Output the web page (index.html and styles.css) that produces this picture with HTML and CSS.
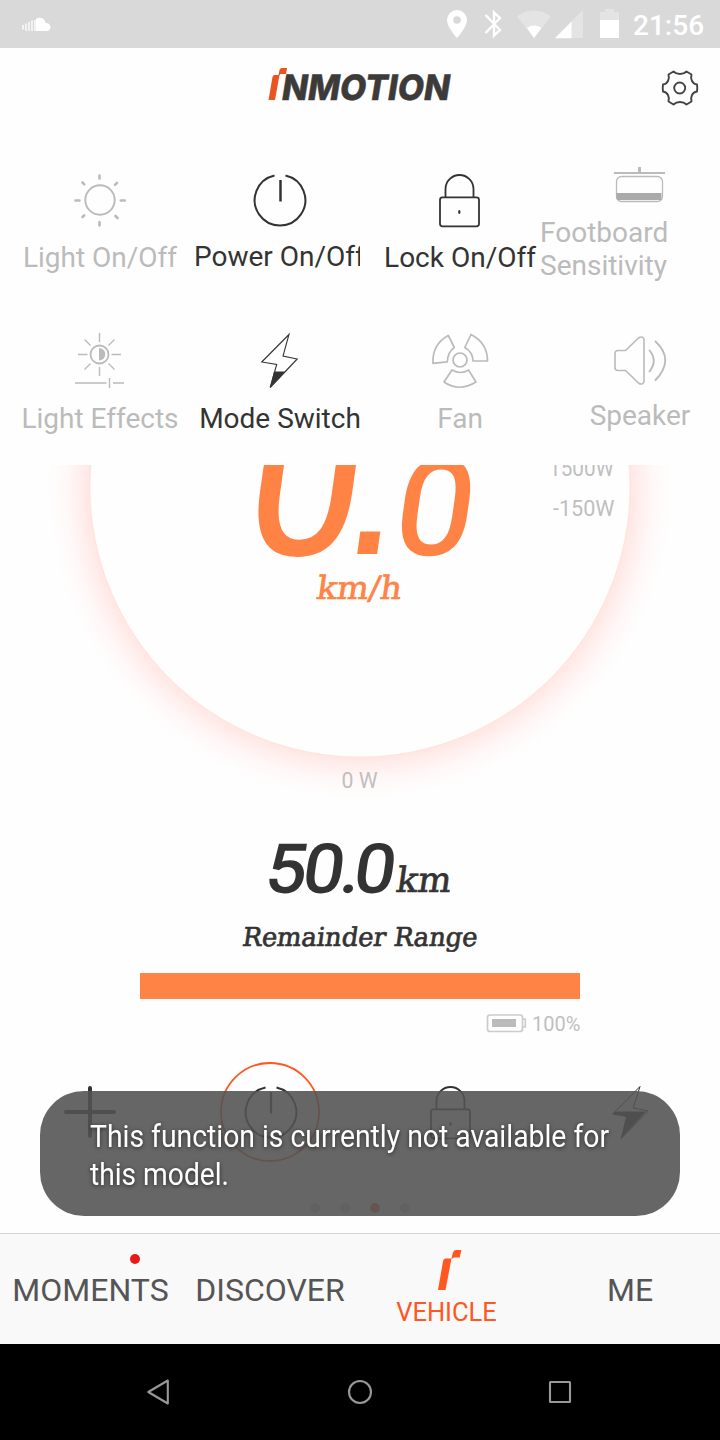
FILE: index.html
```html
<!DOCTYPE html>
<html lang="en">
<head>
<meta charset="utf-8">
<title>InMotion</title>
<link rel="stylesheet" href="styles.css">
</head>
<body>
<div class="screen">
  <header class="status">
    <svg class="status-left" viewBox="0 0 60 48" width="60" height="48">
      <path fill="#fff" d="M36 31V19c1-1 2.500-1.300 4-1.200a5.500 5.500 0 0 1 5.500 5.200c3-.3 5 1.500 5 4s-2 4-4 4z"/>
      <path stroke="#fff" stroke-width="1.800" opacity=".75" d="M23 25v4.500M26 23.500V31M29 22v9M32 20.500V31M35 20v11"/>
    </svg>
    <svg class="status-icons" viewBox="440 0 190 48" width="190" height="48">
      <path fill="#fff" fill-rule="evenodd" d="M457 10a10 10 0 0 0-10 10c0 7 10 18 10 18s10-11 10-18a10 10 0 0 0-10-10zm0 6.200a3.800 3.800 0 1 1 0 7.600 3.800 3.800 0 0 1 0-7.600z"/>
      <path fill="none" stroke="#fff" stroke-width="2.400" d="M485.500 15L500 30l-6 5.500V12.500l6 5.500-14.500 15"/>
      <path fill="#fff" opacity=".3" d="M534 38L517 16.500a27 27 0 0 1 34 0z"/>
      <path fill="#fff" d="M534 38l-7-10a12 12 0 0 1 14.500 0z"/>
      <path fill="#fff" opacity=".3" d="M583 10v28h-28z"/>
      <path fill="#fff" d="M571.500 21.500V38.300H555z"/>
      <path fill="#fff" opacity=".3" d="M600 20v-8h5V9h9v3h5v8z"/>
      <path fill="#fff" d="M600 20h19v18h-19z"/>
    </svg>
    <span class="clock">21:56</span>
  </header>

  <section class="panel">
    <div class="brand">
      <svg class="logo" viewBox="260 60 200 50" width="200" height="50" role="img">
        <path fill="#e95420" d="M274.500 75h5l-4.500 25h-6.500l4-23q.3-2 2-2zM282 68h5l-1 6h-5.500l-.7 1h-1.300l1-5q.5-2 2.500-2z"/>
        <text class="logo-text" transform="translate(280.500 100) skewX(-9)" textLength="168" lengthAdjust="spacingAndGlyphs">NMOTION</text>
      </svg>
      <svg class="gear" viewBox="660 68 40 40" width="40" height="40">
        <g fill="none" stroke="#444" stroke-width="1.900" stroke-linejoin="round">
          <path d="M673.500 71.500Q676 74 680 74t6.500-2.500l5 3q-1 3.500 .5 6.500t5 3.500q.6 3.500 0 7-3.500.5-5 3.500t-.5 6.500l-5 3q-2.500-2.500-6.500-2.500t-6.500 2.500l-5-3q1-3.500-.5-6.500t-5-3.500q-.6-3.500 0-7 3.500-.5 5-3.500t.5-6.500z"/>
          <circle cx="679.700" cy="88" r="5.500"/>
        </g>
      </svg>
    </div>
    <div class="tiles">
      <div class="tile off">
        <svg viewBox="0 150 180 91" width="180" height="91"><g fill="none" stroke="#bbb">
          <circle cx="100" cy="200" r="14.700" stroke-width="1.900"/>
          <path stroke-width="2.600" stroke-linecap="round" d="M99.500 175.500v3M99.500 222v3.500M75.500 200.500h4M120.800 200.500h4M82.500 182.500l1.800 1.800M117 182.800l-2 2M82.500 217l1.700-1.700M115.500 216l2 2"/>
        </g></svg>
        <span>Light On/Off</span>
      </div>
      <div class="tile power">
        <svg viewBox="180 150 180 90" width="180" height="90"><path fill="none" stroke="#333" stroke-width="2" d="M274.500 175.500a25.300 25.300 0 1 0 11 0"/><path stroke="#333" stroke-width="2.500" d="M280.500 180v21.500"/></svg>
        <span>Power On/Off</span>
      </div>
      <div class="tile">
        <svg viewBox="360 150 180 91" width="180" height="91"><g fill="none" stroke="#333" stroke-width="1.800"><rect x="440" y="197.300" width="39" height="29" rx="2.500"/><path d="M445.500 197v-8a14 14 0 0 1 28 0v8"/></g><ellipse cx="459.300" cy="212" rx="1.200" ry="2" fill="#333"/></svg>
        <span>Lock On/Off</span>
      </div>
      <div class="tile off foot">
        <svg viewBox="540 150 180 66" width="180" height="66"><path fill="#bbb" d="M614 172h51v2h-51zM638 167h3v5h-3z"/><rect x="616.500" y="176.500" width="46" height="25" rx="5" fill="none" stroke="#bbb" stroke-width="1.300"/><path fill="#aaa" d="M616.500 193h45v7h-43q-2 0-2-2z"/></svg>
        <span>Footboard Sensitivity</span>
      </div>
      <div class="tile off">
        <svg viewBox="0 310 180 92" width="180" height="92"><g fill="none" stroke="#bbb" stroke-width="1.400"><circle cx="99.500" cy="354.500" r="9" stroke-width="1.800"/>
          <path d="M99.500 333v9M99.500 367v9M78 354.500h9.500M111.500 354.500h9.500M84.500 339.500l6 6M114.500 339.500l-6 6M84.500 369.500l6-6M114.500 369.500l-6-6M75 383h31.500M113 383h11M109.500 378v10"/></g><path fill="#bbb" d="M99 348a6.200 6.200 0 0 1 0 12.500z"/></svg>
        <span>Light Effects</span>
      </div>
      <div class="tile">
        <svg viewBox="180 310 180 92" width="180" height="92"><path fill="none" stroke="#333" stroke-width="1.100" d="M289 334.500L261.700 362l15 2.500-6.500 23 27-28.500-14.200-3z"/><path fill="#333" d="M274 371.500h11l-15 16z"/></svg>
        <span>Mode Switch</span>
      </div>
      <div class="tile off">
        <svg viewBox="360 310 180 92" width="180" height="92"><g fill="none" stroke="#bbb" stroke-width="1.700" stroke-linejoin="round"><circle cx="460" cy="360" r="7"/>
          <path d="M448.300 335.500l6 12q-6.500 4.500-7 14.300l-14.300 1.500q-1-19 15.300-27.800zM471 334.500l-6.200 13q8 4.500 8.200 13.500h14.500q0-18-16.500-26.500zM452 370l-8 12q15 10.500 32 0l-7.500-12q-8 5-16.500 0z"/></g></svg>
        <span>Fan</span>
      </div>
      <div class="tile off speaker">
        <svg viewBox="540 310 180 89" width="180" height="89"><g fill="none" stroke="#bbb" stroke-width="1.600" stroke-linecap="round" stroke-linejoin="round"><path d="M625.500 350.500h-7.500q-3 0-3 3v14q0 3 3 3h7.500l13 12.500q2 1.500 4 .8 1.500-.8 1.500-2.800v-41q0-2-1.500-2.800-2-.7-4 .8z"/><path stroke-width="1.900" d="M649.500 350.500q8.500 10 0 21M655.500 341.500q19.500 18 0 38.500"/></g></svg>
        <span>Speaker</span>
      </div>
    </div>
  </section>

  <main class="main">
    <svg class="dial" viewBox="0 465 720 355" width="720" height="355">
      <defs><radialGradient id="glow" gradientUnits="userSpaceOnUse" cx="360" cy="487" r="312">
        <stop offset=".864" stop-color="#ffe6e4"/><stop offset=".9" stop-color="#ffefed"/><stop offset=".94" stop-color="#fff8f8"/><stop offset="1" stop-color="#fefefe"/>
      </radialGradient></defs>
      <circle cx="360" cy="487" r="312" fill="url(#glow)"/>
      <circle cx="360" cy="487" r="270" fill="#fefefe" stroke="#ffdccb" stroke-width=".6"/>
      <g class="speed">
        <text class="speed-int" transform="translate(241 553.500) skewX(-8)" textLength="113" lengthAdjust="spacingAndGlyphs">0</text>
        <rect x="358" y="531.500" width="20" height="22.500" transform="translate(77 0) skewX(-8)"/>
        <text class="speed-dec" transform="translate(390.500 554) skewX(-8)" textLength="78" lengthAdjust="spacingAndGlyphs">0</text>
        <text class="slab unit" transform="translate(315.500 599) skewX(-8)" textLength="85" lengthAdjust="spacingAndGlyphs">km/h</text>
      </g>
      <g class="watt">
        <text x="614" y="476" text-anchor="end" textLength="65" lengthAdjust="spacingAndGlyphs">1500W</text>
        <text x="614.500" y="516" text-anchor="end" textLength="61.500" lengthAdjust="spacingAndGlyphs">-150W</text>
        <text x="359.500" y="788" text-anchor="middle" textLength="36" lengthAdjust="spacingAndGlyphs">0 W</text>
      </g>
    </svg>
    <svg class="range" viewBox="140 820 440 153" width="440" height="153">
      <text class="range-num" transform="translate(263 891.500) skewX(-8) scale(1.08 1)" x="0 35 70 82.500">50.0</text>
      <text class="slab range-unit" transform="translate(395 892) skewX(-8)" textLength="55" lengthAdjust="spacingAndGlyphs">km</text>
      <text class="slab range-label" transform="translate(241.500 946) skewX(-8)" textLength="235" lengthAdjust="spacingAndGlyphs">Remainder Range</text>
    </svg>
    <div class="bar"></div>
    <div class="battery">
      <svg viewBox="486 1012 42 24" width="42" height="24"><rect x="487.500" y="1015" width="35" height="16.500" rx="2.500" fill="none" stroke="#ccc" stroke-width="1.700"/><path fill="none" stroke="#ccc" stroke-width="1.700" d="M523 1019h2.300v8H523"/><path fill="#bbb" d="M492 1019h24v8h-24z"/></svg>
      <span>100%</span>
    </div>
    <svg class="shortcuts" viewBox="0 1055 720 178" width="720" height="178">
      <path stroke="#333" stroke-width="4" stroke-linecap="round" d="M90 1088v48M66 1112h48"/>
      <circle cx="270" cy="1112" r="49" fill="none" stroke="#ff5722" stroke-width="1.800"/>
      <path fill="none" stroke="#333" stroke-width="2" d="M265.500 1087.500a25.300 25.300 0 1 0 11 0"/><path stroke="#333" stroke-width="2.300" d="M271 1092v21.500"/>
      <g fill="none" stroke="#333" stroke-width="1.800"><rect x="431" y="1109.300" width="39" height="29" rx="2.500"/><path d="M436.500 1109v-8a14 14 0 0 1 28 0v8"/></g><ellipse cx="450.500" cy="1124" rx="1.200" ry="2" fill="#333"/>
      <path fill="none" stroke="#333" d="M640 1086.500l-27.300 27.500 14 2.500-5.500 22 27-27.500-15-3z"/><path fill="#333" d="M615 1111.500h31l-25 27 5.500-22-14-2.500z"/>
      <g fill="#ccc"><circle cx="315" cy="1208" r="5"/><circle cx="345" cy="1208" r="5"/><circle cx="375" cy="1208" r="5" fill="#ff7035"/><circle cx="405" cy="1208" r="5"/></g>
    </svg>
    <div class="toast" role="status">
      <svg viewBox="40 1091 640 125" width="640" height="125">
        <text x="90" y="1147" textLength="519" lengthAdjust="spacingAndGlyphs">This function is currently not available for</text>
        <text x="90" y="1185" textLength="139" lengthAdjust="spacingAndGlyphs">this model.</text>
      </svg>
    </div>
  </main>

  <nav class="tabs">
    <a class="tab">MOMENTS<i class="dot"></i></a>
    <a class="tab">DISCOVER</a>
    <a class="tab active">
      <svg viewBox="434 1248 30 44" width="30" height="44"><path fill="#ff5722" d="M445.500 1258.500h6l-6 31.500h-7.500l5-28.500q.5-3 2.500-3zM456 1250h5.300l-1.500 7.500h-5.800l-1.500 1h-1l1-4.500q1-4 3.500-4z"/></svg>
      <span>VEHICLE</span>
    </a>
    <a class="tab">ME</a>
  </nav>
  <footer class="system">
    <svg viewBox="60 1344 600 96" width="600" height="96"><g fill="none" stroke="#999" stroke-width="2.100" stroke-linejoin="round"><path d="M167.800 1380.500v23l-19.500-11.500z"/><circle cx="360" cy="1392" r="11"/><rect x="550" y="1382" width="20" height="20" rx=".5"/></g></svg>
  </footer>
</div>
</body>
</html>
```
FILE: styles.css
```css
* { box-sizing: border-box; }
body { margin: 0; font-family: Roboto, sans-serif; }
svg { display: block; flex: none; }

.screen { width: 720px; height: 1440px; display: flex; flex-direction: column; background: #fefefe; overflow: hidden; }

.status { height: 48px; background: #d9d9d9; display: flex; align-items: center; padding-right: 16px; }
.status-icons { margin-left: auto; margin-right: 3px; }
.clock { color: #fff; font-size: 28px; font-weight: 500; line-height: 48px; padding-top: 3px; width: 71px; white-space: nowrap; }

.panel { height: 417px; background: #fefefe; }
.brand { height: 102px; display: flex; justify-content: flex-end; align-items: flex-start; padding: 12px 20px 0 0; }
.logo { margin-right: 200px; overflow: visible; }
.gear { margin-top: 8px; }
.logo-text { font: 800 35px Inter, sans-serif; fill: #3d3b39; stroke: #3d3b39; stroke-width: .5; }

.tiles { display: grid; grid-template-columns: repeat(4, 180px); grid-template-rows: 160px 155px; }
.tile { display: flex; flex-direction: column; align-items: center; color: #333; font-size: 28px; line-height: 33px; white-space: nowrap; }
.tile span { margin-left: 20px; }
.off { color: #bbb; }
.tile.power span { width: 166px; margin-left: 14px; overflow: hidden; }
.tile.foot { align-items: flex-start; }
.tile.foot span { width: 140px; margin-left: 0; white-space: normal; }

.main { position: relative; height: 768px; display: flex; flex-direction: column; align-items: center; }
.speed { fill: #ff8345; stroke: #ff8345; stroke-width: 0; }
.speed-int { font: 400 205px Roboto, sans-serif; stroke-width: 2; }
.speed-dec { font: 400 132px Roboto, sans-serif; stroke-width: 2; }
.slab { font-family: "DejaVu Serif", serif; stroke-width: .7; }
.unit { font-size: 32px; }
.watt { font-size: 22px; fill: #bfbfbf; }
.range { fill: #333; stroke: #333; stroke-width: 0; }
.range-num { font: 400 67px Roboto, sans-serif; stroke-width: 1.5; }
.range-unit { font-size: 35px; }
.range-label { font-size: 26px; }
.bar { width: 440px; height: 26px; background: #ff8345; }
.battery { width: 440px; height: 56px; display: flex; justify-content: flex-end; align-items: flex-start; padding-top: 13px; gap: 4px; color: #bfbfbf; font-size: 20px; line-height: 24px; }
.battery span { width: 48px; }

.toast { position: absolute; left: 40px; top: 626px; width: 640px; height: 125px; border-radius: 44px; background: rgba(83, 83, 83, .89); }
.toast text { font-size: 32px; fill: #fff; }
.toast svg { filter: drop-shadow(0 1px 2px rgba(0, 0, 0, .6)); }

.tabs { height: 111px; background: #f9f9f9; border-top: 1px solid #d5d5d5; display: grid; grid-template-columns: 181px 178px 175px 192px; }
.tab { position: relative; display: flex; flex-direction: column; align-items: center; padding-top: 37px; font-size: 32px; line-height: 38px; color: #555; }
.tab.active { padding-top: 14px; font-size: 25.500px; line-height: 30px; color: #ff5722; }
.tab.active svg { margin-left: 5px; }
.active span { margin-top: 5px; }
.dot { position: absolute; left: 130px; top: 20px; width: 10px; height: 10px; border-radius: 50%; background: #e8191b; }

.system { height: 96px; background: #000; display: flex; justify-content: center; }
```
